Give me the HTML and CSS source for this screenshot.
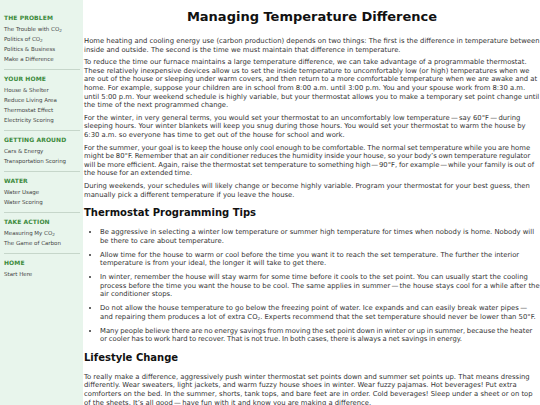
FILE: index.html
```html
<!DOCTYPE html>
<html lang="en">
<head>
<meta charset="utf-8">
<title>Managing Temperature Difference</title>
<link rel="stylesheet" href="styles.css">
</head>
<body>
<div class="page">
  <nav class="sidebar">
    <div class="nav-group">
      <div class="nav-title">THE PROBLEM</div>
      <a class="nav-link" href="#">The Trouble with CO<sub>2</sub></a>
      <a class="nav-link" href="#">Politics of CO<sub>2</sub></a>
      <a class="nav-link" href="#">Politics &amp; Business</a>
      <a class="nav-link" href="#">Make a Difference</a>
    </div>
    <div class="nav-group">
      <div class="nav-title">YOUR HOME</div>
      <a class="nav-link" href="#">House &amp; Shelter</a>
      <a class="nav-link" href="#">Reduce Living Area</a>
      <a class="nav-link" href="#">Thermostat Effect</a>
      <a class="nav-link" href="#">Electricity Scoring</a>
    </div>
    <div class="nav-group">
      <div class="nav-title">GETTING AROUND</div>
      <a class="nav-link" href="#">Cars &amp; Energy</a>
      <a class="nav-link" href="#">Transportation Scoring</a>
    </div>
    <div class="nav-group">
      <div class="nav-title">WATER</div>
      <a class="nav-link" href="#">Water Usage</a>
      <a class="nav-link" href="#">Water Scoring</a>
    </div>
    <div class="nav-group">
      <div class="nav-title">TAKE ACTION</div>
      <a class="nav-link" href="#">Measuring My CO<sub>2</sub></a>
      <a class="nav-link" href="#">The Game of Carbon</a>
    </div>
    <div class="nav-group">
      <div class="nav-title">HOME</div>
      <a class="nav-link" href="#">Start Here</a>
    </div>
  </nav>
  <main class="main">
    <h1 class="title">Managing Temperature Difference</h1>
    <p>Home heating and cooling energy use (carbon production) depends on two things: The first is the difference in temperature between inside and outside. The second is the time we must maintain that difference in temperature.</p>
    <p>To reduce the time our furnace maintains a large temperature difference, we can take advantage of a programmable thermostat.<br>These relatively inexpensive devices allow us to set the inside temperature to uncomfortably low (or high) temperatures when we are out of the house or sleeping under warm covers, and then return to a more comfortable temperature when we are awake and at home. For example, suppose your children are in school from 8:00 a.m. until 3:00 p.m. You and your spouse work from 8:30 a.m. until 5:00 p.m. Your weekend schedule is highly variable, but your thermostat allows you to make a temporary set point change until the time of the next programmed change.</p>
    <p>For the winter, in very general terms, you would set your thermostat to an uncomfortably low temperature <span class="dash">—</span> say 60°F <span class="dash">—</span> during sleeping hours. Your winter blankets will keep you snug during those hours. You would set your thermostat to warm the house by 6:30 a.m. so everyone has time to get out of the house for school and work.</p>
    <p class="tight">For the summer, your goal is to keep the house only cool enough to be comfortable. The normal set temperature while you are home might be 80°F. Remember that an air conditioner reduces the humidity inside your house, so your body’s own temperature regulator will be more efficient. Again, raise the thermostat set temperature to something high <span class="dash">—</span> 90°F, for example <span class="dash">—</span> while your family is out of the house for an extended time.</p>
    <p>During weekends, your schedules will likely change or become highly variable. Program your thermostat for your best guess, then manually pick a different temperature if you leave the house.</p>
    <h2 class="section">Thermostat Programming Tips</h2>
    <ul class="tips">
      <li>Be aggressive in selecting a winter low temperature or summer high temperature for times when nobody is home. Nobody will be there to care about temperature.</li>
      <li>Allow time for the house to warm or cool before the time you want it to reach the set temperature. The further the interior temperature is from your ideal, the longer it will take to get there.</li>
      <li>In winter, remember the house will stay warm for some time before it cools to the set point. You can usually start the cooling process before the time you want the house to be cool. The same applies in summer <span class="dash">—</span> the house stays cool for a while after the air conditioner stops.</li>
      <li>Do not allow the house temperature to go below the freezing point of water. Ice expands and can easily break water pipes <span class="dash">—</span> and repairing them produces a lot of extra CO<sub>2</sub>. Experts recommend that the set temperature should never be lower than 50°F.</li>
      <li class="tight">Many people believe there are no energy savings from moving the set point down in winter or up in summer, because the heater or cooler has to work hard to recover. That is not true. In both cases, there is always a net savings in energy.</li>
    </ul>
    <h2 class="section">Lifestyle Change</h2>
    <p>To really make a difference, aggressively push winter thermostat set points down and summer set points up. That means dressing differently. Wear sweaters, light jackets, and warm fuzzy house shoes in winter. Wear fuzzy pajamas. Hot beverages! Put extra comforters on the bed. In the summer, shorts, tank tops, and bare feet are in order. Cold beverages! Sleep under a sheet or on top of the sheets. It’s all good <span class="dash">—</span> have fun with it and know you are making a difference.</p>
  </main>
</div>
</body>
</html>
```

FILE: styles.css
```css
html, body {
  margin: 0;
  padding: 0;
}

body {
  font-family: "DejaVu Sans", Verdana, sans-serif;
  color: #333;
  background: #fff;
}

.page {
  display: flex;
  min-height: 405px;
}

.sidebar {
  width: 83px;
  flex: none;
  box-sizing: border-box;
  background: #e8f5ec;
  padding: 13px 3px 0 4px;
}

.nav-group {
  padding-bottom: 5px;
  margin-bottom: 4px;
  border-bottom: 1px solid #c6d6ca;
}

.nav-group:last-child {
  border-bottom: none;
}

.nav-title {
  font-size: 6px;
  font-weight: bold;
  line-height: 10px;
  color: #3b8a3b;
  margin-bottom: 1px;
  letter-spacing: 0.1px;
}

.nav-link {
  display: block;
  font-size: 5.5px;
  line-height: 10px;
  color: #444;
  text-decoration: none;
  white-space: nowrap;
}

sub {
  font-size: 4.2px;
  line-height: 0;
  vertical-align: -0.5px;
}

.dash {
  margin: 0 -0.9px;
}

.main {
  flex: 1;
  min-width: 0;
  padding: 0 0 0 1px;
  font-size: 6.84px;
  line-height: 8.6px;
}

.title {
  font-size: 13px;
  line-height: 16px;
  font-weight: bold;
  color: #111;
  text-align: center;
  margin: 9px 0 12px;
}

.main p {
  margin: 0 0 4px;
}

.main .tight {
  word-spacing: -0.45px;
}

.section {
  font-size: 10px;
  line-height: 12px;
  font-weight: bold;
  color: #111;
  margin: 8px 0 9px;
}

.tips {
  margin: 0 0 8px;
  padding-left: 16px;
}

.tips li {
  margin-bottom: 5.3px;
}
```
